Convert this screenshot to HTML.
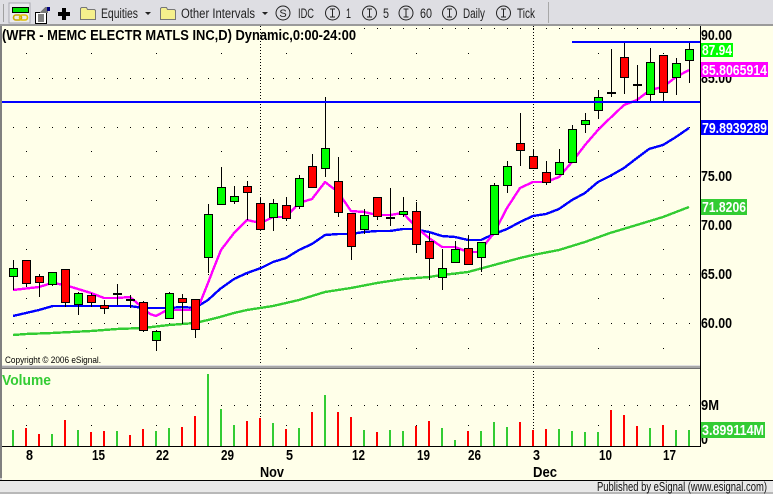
<!DOCTYPE html>
<html><head><meta charset="utf-8"><style>
html,body{margin:0;padding:0;background:#ffffe9}
svg{display:block}
text{font-family:"Liberation Sans",sans-serif}
.b{font-weight:bold;font-size:14.5px;fill:#000}
.w{font-weight:bold;font-size:14.5px;fill:#fff}
.t{font-size:13.5px;fill:#222}
</style></head><body>
<svg width="773" height="494" viewBox="0 0 773 494" xmlns="http://www.w3.org/2000/svg">
<rect width="773" height="494" fill="#ffffe9"/>
<!-- toolbar -->
<g shape-rendering="crispEdges">
<rect width="773" height="25" fill="#dedee3"/>
<rect y="24" width="773" height="2" fill="#9a9a9a"/>
<rect x="3" y="4" width="1" height="18" fill="#a0a0a0"/>
<rect x="9" y="3" width="21" height="20" fill="#ebebee" stroke="#a8a8b0"/>
<rect x="12.5" y="7.5" width="16" height="5" fill="#00e000" stroke="#000"/>
<rect x="548" y="2" width="1" height="21" fill="#a8a8a8"/>
<!-- plus -->
<path d="M62 8h4v4h4v4h-4v4h-4v-4h-4v-4h4z" fill="#000"/>
<!-- doc icon -->
<rect x="35.5" y="12.5" width="11" height="11" fill="#fff" stroke="#000"/>
<path d="M38 15h6M38 17h6M38 19h6M38 21h6" stroke="#000"/>
<path d="M40 12l5-5h3v6h-8z" fill="#777"/>
<rect x="47" y="7" width="3" height="4" fill="#000080"/>
</g>
<!-- chain -->
<rect x="13.5" y="15" width="8" height="5" rx="2.5" fill="none" stroke="#c8a800" stroke-width="1.6"/>
<rect x="19.5" y="15" width="8" height="5" rx="2.5" fill="none" stroke="#e0c000" stroke-width="1.6"/>
<!-- folders -->
<path d="M80.5 19.5v-11l1-1h5l1 2h7l1 1v9z" fill="#f5f08c" stroke="#777"/>
<path d="M160.5 19.5v-11l1-1h5l1 2h7l1 1v9z" fill="#f5f08c" stroke="#777"/>
<path d="M145 12h6l-3 3z M262 12h6l-3 3z" fill="#222"/>
<text x="101" y="18" class="t" textLength="37" lengthAdjust="spacingAndGlyphs">Equities</text>
<text x="181" y="18" class="t" textLength="74" lengthAdjust="spacingAndGlyphs">Other Intervals</text>
<g fill="none" stroke="#222" stroke-width="1">
<circle cx="283" cy="13" r="7"/><circle cx="332.5" cy="13" r="7"/><circle cx="369.5" cy="13" r="7"/><circle cx="406" cy="13" r="7"/><circle cx="449.5" cy="13" r="7"/><circle cx="503.5" cy="13" r="7"/>
<path d="M330 9h5M332.5 9v8M330 17h5M367 9h5M369.5 9v8M367 17h5M403.5 9h5M406 9v8M403.5 17h5M447 9h5M449.5 9v8M447 17h5M501 9h5M503.5 9v8M501 17h5"/>
</g>
<text x="283" y="17" text-anchor="middle" style="font-size:11px;fill:#222">S</text>
<text x="298" y="18" class="t" textLength="16" lengthAdjust="spacingAndGlyphs">IDC</text>
<text x="346" y="18" class="t" textLength="5" lengthAdjust="spacingAndGlyphs">1</text>
<text x="383" y="18" class="t" textLength="6" lengthAdjust="spacingAndGlyphs">5</text>
<text x="420" y="18" class="t" textLength="12" lengthAdjust="spacingAndGlyphs">60</text>
<text x="463" y="18" class="t" textLength="22" lengthAdjust="spacingAndGlyphs">Daily</text>
<text x="517" y="18" class="t" textLength="18" lengthAdjust="spacingAndGlyphs">Tick</text>

<!-- frame -->
<g shape-rendering="crispEdges">
<rect x="0" y="26" width="2" height="452" fill="#808080"/>
<rect x="0" y="481" width="773" height="13" fill="#e8e8e8"/>
<rect x="0" y="480" width="773" height="1" fill="#000"/>
<rect x="0" y="492" width="773" height="2" fill="#b8b8b8"/>
<rect x="0" y="478" width="2" height="2" fill="#d0d0d0"/>

<!-- dots -->
<g stroke="#000" stroke-width="1" fill="none" stroke-dasharray="1 12">
<path d="M364 28.5H690"/>
<path d="M13 78.5H690"/>
<path d="M13 127.5H690"/>
<path d="M13 176.5H690"/>
<path d="M13 225.5H690"/>
<path d="M13 274.5H690"/>
<path d="M13 323.5H690"/>
<path d="M13 405.5H690"/>
</g>
<g fill="#000">
<path id="wk" d="M26 53h1v1h-1zM91 53h1v1h-1zM156 53h1v1h-1zM221 53h1v1h-1zM286 53h1v1h-1zM351 53h1v1h-1zM416 53h1v1h-1zM468 53h1v1h-1zM533 53h1v1h-1zM598 53h1v1h-1zM663 53h1v1h-1z"/>
<use href="#wk" y="98"/><use href="#wk" y="147"/><use href="#wk" y="196"/><use href="#wk" y="245"/><use href="#wk" y="295"/><use href="#wk" y="372"/>
</g>
<path d="M260.5 26V446M533.5 26V446" stroke="#000" stroke-dasharray="1 2" fill="none"/>
</g>

<!-- moving averages -->
<g fill="none" stroke-width="2.4" stroke-linejoin="round" shape-rendering="crispEdges">
<path stroke="#33cc33" d="M13 335L26 334L52 333L91 331L117 329L143 328L169 325L195 323L208 320L220 317L234 313L247 310L260 308L273 306L286 303L299 300L312 296L325 292L351 288L377 283L403 279L429 277L442 275L468 272L494 265L520 258L533 255L559 250L585 242L610 233L640 224L663 217L689 207"/>
<path stroke="#0000ff" d="M13 316L26 313L39 310L53 306L117 306L130 306L143 308L169 308L182 307L195 308L208 300L220 289L234 279L247 273L261 268L273 262L286 258L299 250L312 244L325 235L338 234L351 234L364 232L377 231L390 231L403 229L413 229L429 232L442 236L455 237L468 240L481 240L494 234L507 229L520 222L533 216L546 214L559 209L572 200L585 193L598 182L610 176L624 168L637 158L649 149L663 145L676 137L689 128"/>
<path stroke="#ff00ff" d="M13 290L26 288.5L39 287L52 283L65 285L78 289L91 293L104 298L117 298L130 297L143 308L150 314L156 316L167 310L190 310L200 303L208 283L213 270L221 250L234 233L247 220L256 222L265 221L273 217L286 217L299 203L312 199L325 182L338 192L351 211L364 212L377 215L390 215L403 213L417 228L429 238L442 247L455 247L468 252L481 252L486 243L494 233L507 208L520 188L533 182L546 182L559 177L572 162L585 145L598 130L605 123L624 105L637 100L650 90L663 87L676 77L689 70"/>
</g>

<g shape-rendering="crispEdges">
<!-- wicks -->
<path stroke="#000" stroke-width="1" fill="none" d="M13.5 260V290M26.5 260V287M39.5 274V297M52.5 272V286M65.5 269V307M78.5 292V315M91.5 293V307M104.5 300V314M117.5 284V305M130.5 295V308M143.5 301V332M156.5 330V351M169.5 292V319M182.5 294V324M195.5 299V338M208.5 204V273M221.5 167V204M234.5 186V204M247.5 181V220M260.5 197V229M273.5 199V231M286.5 197V221M299.5 175V209M312.5 154V187M325.5 97V177M338.5 157V217M351.5 213V260M364.5 209V234M377.5 197V220M390.5 188V226M403.5 197V217M416.5 202V253M429.5 233V280M442.5 249V290M455.5 241V262M468.5 235V264M481.5 242V272M494.5 183V234M507.5 161V193M520.5 113V166M533.5 149V168M546.5 161V185M559.5 149V174M572.5 125V162M585.5 113V133M598.5 90V119M611.5 49V97M624.5 42V94M637.5 65V103M650.5 48V101M663.5 55V102M676.5 58V95M689.5 43V83"/>
<!-- green bodies -->
<path fill="#00ff00" stroke="#000" d="M9.5 268.5h8v8h-8zM48.5 272.5h8v12h-8zM74.5 293.5h8v11h-8zM152.5 331.5h8v9h-8zM165.5 293.5h8v25h-8zM204.5 214.5h8v43h-8zM217.5 187.5h8v17h-8zM230.5 196.5h8v5h-8zM269.5 203.5h8v14h-8zM295.5 178.5h8v28h-8zM321.5 148.5h8v20h-8zM360.5 215.5h8v14h-8zM399.5 211.5h8v3h-8zM438.5 268.5h8v9h-8zM451.5 249.5h8v13h-8zM477.5 242.5h8v15h-8zM490.5 185.5h8v49h-8zM503.5 166.5h8v19h-8zM555.5 162.5h8v12h-8zM568.5 129.5h8v33h-8zM581.5 120.5h8v4h-8zM594.5 97.5h8v13h-8zM646.5 62.5h8v32h-8zM672.5 63.5h8v14h-8zM685.5 49.5h8v11h-8z"/>
<!-- red bodies -->
<path fill="#ff0000" stroke="#000" d="M22.5 260.5h8v23h-8zM35.5 276.5h8v6h-8zM61.5 269.5h8v33h-8zM87.5 295.5h8v7h-8zM100.5 305.5h8v3h-8zM139.5 302.5h8v28h-8zM178.5 298.5h8v4h-8zM191.5 299.5h8v30h-8zM243.5 186.5h8v6h-8zM256.5 203.5h8v26h-8zM282.5 205.5h8v13h-8zM308.5 166.5h8v21h-8zM334.5 181.5h8v31h-8zM347.5 213.5h8v33h-8zM373.5 197.5h8v19h-8zM412.5 211.5h8v33h-8zM425.5 241.5h8v17h-8zM464.5 248.5h8v16h-8zM516.5 143.5h8v7h-8zM529.5 156.5h8v12h-8zM542.5 172.5h8v10h-8zM620.5 57.5h8v20h-8zM659.5 55.5h8v37h-8z"/>
<!-- dojis -->
<path fill="#000" d="M113 293h9v2h-9zM126 299h9v2h-9zM386 217h9v2h-9zM607 92h9v2h-9zM633 84h9v2h-9z"/>
<!-- horizontals -->
<path fill="#0000ff" d="M2 101h698v2H2zM572 41h128v2H572z"/>

<!-- volume separator -->
<rect x="2" y="365" width="698" height="1" fill="#e0e0e0"/>
<rect x="2" y="366" width="698" height="2" fill="#a8a8a8"/>
<rect x="2" y="368" width="698" height="1" fill="#707070"/>
<!-- axes -->
<rect x="700" y="26" width="1" height="421" fill="#000"/>
<rect x="2" y="446" width="699" height="1" fill="#000"/>

<!-- volume bars -->
<g fill="none" stroke-width="2">
<path stroke="#33cc33" d="M13 446V430M52 446V434M78 446V430M117 446V431M156 446V431M169 446V428M208 446V374M221 446V409M234 446V425M273 446V423M299 446V428M325 446V395M364 446V430M390 446V430M403 446V431M442 446V428M455 446V440M481 446V431M494 446V422M507 446V427M559 446V429M572 446V431M585 446V432M598 446V432M650 446V428M676 446V430M689 446V430"/>
<path stroke="#ff0000" d="M26 446V428M39 446V434M65 446V420M91 446V432M104 446V431M130 446V435M143 446V429M182 446V427M195 446V416M247 446V421M260 446V418M286 446V429M312 446V412M338 446V412M351 446V417M377 446V432M416 446V426M429 446V421M468 446V431M520 446V422M533 446V430M546 446V429M611 446V410M624 446V415M637 446V426M663 446V425"/>
</g>
</g>

<!-- axis labels -->
<text x="701" y="83" class="b" textLength="31" lengthAdjust="spacingAndGlyphs">85.00</text>
<text x="701" y="40" class="b" textLength="31" lengthAdjust="spacingAndGlyphs">90.00</text>
<text x="701" y="181" class="b" textLength="31" lengthAdjust="spacingAndGlyphs">75.00</text>
<text x="701" y="230" class="b" textLength="31" lengthAdjust="spacingAndGlyphs">70.00</text>
<text x="701" y="279" class="b" textLength="31" lengthAdjust="spacingAndGlyphs">65.00</text>
<text x="701" y="328" class="b" textLength="31" lengthAdjust="spacingAndGlyphs">60.00</text>
<text x="701" y="410" class="b" textLength="18" lengthAdjust="spacingAndGlyphs">9M</text>
<text x="701" y="444" class="b" textLength="7" lengthAdjust="spacingAndGlyphs">0</text>
<g shape-rendering="crispEdges">
<rect x="701" y="43" width="32" height="14" fill="#00ff00"/>
<rect x="701" y="62" width="67" height="15" fill="#ff00ff"/>
<rect x="701" y="120" width="67" height="15" fill="#0000ff"/>
<rect x="701" y="199" width="46" height="16" fill="#33cc33"/>
<rect x="701" y="422" width="64" height="16" fill="#33cc33"/>
</g>
<text x="702" y="55" class="w" textLength="30" lengthAdjust="spacingAndGlyphs">87.94</text>
<text x="702" y="75" class="w" textLength="65" lengthAdjust="spacingAndGlyphs">85.8065914</text>
<text x="702" y="133" class="w" textLength="65" lengthAdjust="spacingAndGlyphs">79.8939289</text>
<text x="702" y="212" class="w" textLength="44" lengthAdjust="spacingAndGlyphs">71.8206</text>
<text x="702" y="435" class="w" textLength="62" lengthAdjust="spacingAndGlyphs">3.899114M</text>

<!-- title -->
<text x="2" y="40" class="b" textLength="354" lengthAdjust="spacingAndGlyphs">(WFR - MEMC ELECTR MATLS INC,D) Dynamic,0:00-24:00</text>
<text x="5" y="363" style="font-size:9.5px;font-weight:normal;fill:#000" textLength="96" lengthAdjust="spacingAndGlyphs">Copyright © 2006 eSignal.</text>
<text x="2" y="385" style="font-size:14.5px;font-weight:bold;fill:#33cc33" textLength="49" lengthAdjust="spacingAndGlyphs">Volume</text>

<!-- dates -->
<text x="26" y="460" class="b" textLength="7" lengthAdjust="spacingAndGlyphs">8</text>
<text x="92" y="460" class="b" textLength="13" lengthAdjust="spacingAndGlyphs">15</text>
<text x="156" y="460" class="b" textLength="13" lengthAdjust="spacingAndGlyphs">22</text>
<text x="221" y="460" class="b" textLength="13" lengthAdjust="spacingAndGlyphs">29</text>
<text x="286" y="460" class="b" textLength="7" lengthAdjust="spacingAndGlyphs">5</text>
<text x="352" y="460" class="b" textLength="13" lengthAdjust="spacingAndGlyphs">12</text>
<text x="417" y="460" class="b" textLength="13" lengthAdjust="spacingAndGlyphs">19</text>
<text x="468" y="460" class="b" textLength="13" lengthAdjust="spacingAndGlyphs">26</text>
<text x="533" y="460" class="b" textLength="7" lengthAdjust="spacingAndGlyphs">3</text>
<text x="599" y="460" class="b" textLength="13" lengthAdjust="spacingAndGlyphs">10</text>
<text x="663" y="460" class="b" textLength="13" lengthAdjust="spacingAndGlyphs">17</text>
<text x="260" y="477" class="b" textLength="24" lengthAdjust="spacingAndGlyphs">Nov</text>
<text x="533" y="477" class="b" textLength="24" lengthAdjust="spacingAndGlyphs">Dec</text>
<text x="597" y="491" style="font-size:12.5px;fill:#111" textLength="170" lengthAdjust="spacingAndGlyphs">Published by eSignal (www.esignal.com)</text>
</svg>
</body></html>
